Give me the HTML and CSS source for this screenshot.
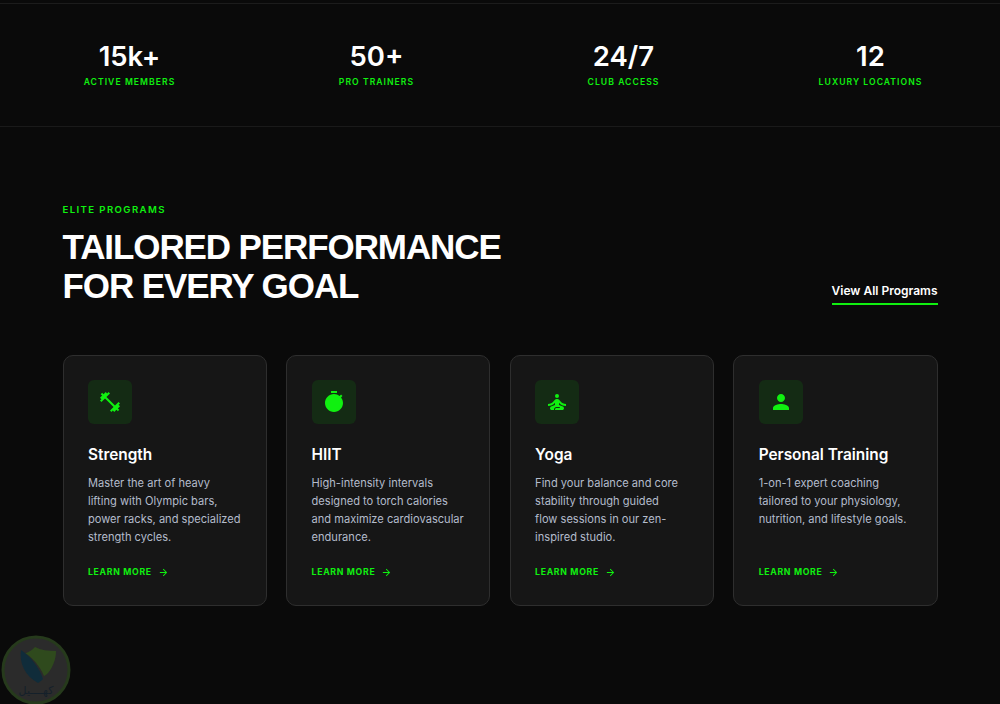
FILE: index.html
```html
<!DOCTYPE html>
<html lang="en">
<head>
    <meta charset="UTF-8">
    <meta name="viewport" content="width=device-width, initial-scale=1.0">
    <title>Elite Programs</title>
    <link rel="stylesheet" href="styles.css">
</head>
<body>

    <!-- Stats -->
    <div class="stats">
        <div class="stat">
            <div class="stat-value">15k+</div>
            <div class="stat-label">Active Members</div>
        </div>
        <div class="stat">
            <div class="stat-value">50+</div>
            <div class="stat-label">Pro Trainers</div>
        </div>
        <div class="stat">
            <div class="stat-value">24/7</div>
            <div class="stat-label">Club Access</div>
        </div>
        <div class="stat">
            <div class="stat-value">12</div>
            <div class="stat-label">Luxury Locations</div>
        </div>
    </div>

    <!-- Programs -->
    <div class="programs">
        <div class="programs-head">
            <div>
                <div class="eyebrow">Elite Programs</div>
                <h1>Tailored Performance<br>For Every Goal</h1>
            </div>
            <a class="view-all" href="#">View All Programs</a>
        </div>

        <div class="cards">
            <div class="card">
                <div class="card-icon">
                    <svg viewBox="0 0 24 24"><path d="M20.57 14.86L22 13.43 20.57 12 17 15.57 8.43 7 12 3.43 10.57 2 9.14 3.43 7.71 2 5.57 4.14 4.14 2.71 2.71 4.14l1.43 1.43L2 7.71l1.43 1.43L2 10.57 3.43 12 7 8.43 15.57 17 12 20.57 13.43 22l1.43-1.43L16.29 22l2.14-2.14 1.43 1.43 1.43-1.43-1.43-1.43L22 16.29z"/></svg>
                </div>
                <h3>Strength</h3>
                <p>Master the art of heavy<br>lifting with Olympic bars,<br>power racks, and specialized<br>strength cycles.</p>
                <a class="learn" href="#">Learn More <svg viewBox="0 0 24 24"><path d="M12 4l-1.41 1.41L16.17 11H4v2h12.17l-5.58 5.59L12 20l8-8z"/></svg></a>
            </div>
            <div class="card">
                <div class="card-icon">
                    <svg viewBox="0 0 24 24"><path d="M15 1H9v2h6V1zm-4 13h2V8h-2v6zm8.03-6.61l1.42-1.42c-.43-.51-.9-.99-1.41-1.41l-1.42 1.42C16.07 4.74 14.12 4 12 4c-4.97 0-9 4.03-9 9s4.02 9 9 9 9-4.03 9-9c0-2.12-.74-4.07-1.97-5.61z"/></svg>
                </div>
                <h3>HIIT</h3>
                <p>High-intensity intervals<br>designed to torch calories<br>and maximize cardiovascular<br>endurance.</p>
                <a class="learn" href="#">Learn More <svg viewBox="0 0 24 24"><path d="M12 4l-1.41 1.41L16.17 11H4v2h12.17l-5.58 5.59L12 20l8-8z"/></svg></a>
            </div>
            <div class="card">
                <div class="card-icon">
                    <svg viewBox="0 0 24 24"><circle cx="12" cy="6" r="2"/><path d="M21 16v-2c-2.24 0-4.16-.96-5.6-2.68l-1.34-1.6c-.38-.46-.94-.72-1.53-.72h-1.05c-.59 0-1.15.26-1.53.72l-1.34 1.6C7.16 13.04 5.24 14 3 14v2c2.77 0 5.19-1.17 7-3.25V15l-3.88 1.55c-.67.27-1.12.93-1.12 1.66C5 19.2 5.8 20 6.79 20H9v-.5c0-1.38 1.12-2.5 2.5-2.5h3c.28 0 .5.22.5.5s-.22.5-.5.5h-3c-.83 0-1.5.67-1.5 1.5v.5h7.21c.99 0 1.79-.8 1.79-1.79 0-.73-.45-1.39-1.12-1.66L14 15v-2.25c1.81 2.08 4.23 3.25 7 3.25z"/></svg>
                </div>
                <h3>Yoga</h3>
                <p>Find your balance and core<br>stability through guided<br>flow sessions in our zen-<br>inspired studio.</p>
                <a class="learn" href="#">Learn More <svg viewBox="0 0 24 24"><path d="M12 4l-1.41 1.41L16.17 11H4v2h12.17l-5.58 5.59L12 20l8-8z"/></svg></a>
            </div>
            <div class="card">
                <div class="card-icon">
                    <svg viewBox="0 0 24 24"><path d="M12 12c2.21 0 4-1.79 4-4s-1.79-4-4-4-4 1.79-4 4 1.79 4 4 4zm0 2c-2.67 0-8 1.34-8 4v2h16v-2c0-2.66-5.33-4-8-4z"/></svg>
                </div>
                <h3>Personal Training</h3>
                <p>1-on-1 expert coaching<br>tailored to your physiology,<br>nutrition, and lifestyle goals.</p>
                <a class="learn" href="#">Learn More <svg viewBox="0 0 24 24"><path d="M12 4l-1.41 1.41L16.17 11H4v2h12.17l-5.58 5.59L12 20l8-8z"/></svg></a>
            </div>
        </div>
    </div>

    <!-- Watermark -->
    <div class="watermark">
        <svg viewBox="0 0 70 70">
            <circle cx="35" cy="35" r="33" fill="#2b2b2b" stroke="#263a1c" stroke-width="3"/>
            <path d="M34 12 C30 16 26 18 24 18 C31 22 39 31 43 41 C45 40 46 39 47 38 C52 32 55 24 55 16 C47 16 40 15 34 12z" fill="#2f4a1d"/>
            <path d="M20 15 C18 28 24 41 37 48 C39 47 41 45 42 44 C38 32 30 22 20 15z" fill="#102c3a"/>
        </svg>
        <span class="watermark-text">كهــــيل</span>
    </div>

</body>
</html>
```

FILE: styles.css
```css
/* General Styles */
* {
    margin: 0;
    padding: 0;
    box-sizing: border-box;
}
body {
    background: #0a0a0a;
    color: #ffffff;
    font-family: Inter, "Liberation Sans", sans-serif;
    height: 704px;
    overflow: hidden;
    padding-top: 3px;
}

/* Stats */
.stats {
    display: grid;
    grid-template-columns: repeat(4, 132px);
    justify-content: space-between;
    padding: 38px 63.5px 0;
    height: 124px;
    border-top: 1px solid #1c1c1c;
    border-bottom: 1px solid #1a1a1a;
}
.stat {
    text-align: center;
}
.stat-value {
    font-size: 27.5px;
    font-weight: 600;
    line-height: 28px;
}
.stat-label {
    margin-top: 6px;
    font-size: 8.6px;
    font-weight: 600;
    line-height: 12px;
    letter-spacing: 1.05px;
    text-transform: uppercase;
    color: #10f010;
}

/* Programs */
.programs {
    padding: 77px 62.5px 0;
}
.programs-head {
    display: flex;
    justify-content: space-between;
    align-items: flex-end;
    margin-bottom: 50px;
}
.eyebrow {
    font-size: 9.6px;
    font-weight: 600;
    line-height: 12px;
    letter-spacing: 1.4px;
    text-transform: uppercase;
    color: #10f010;
    margin-bottom: 12px;
}
h1 {
    font-family: "Liberation Sans", Arial, sans-serif;
    font-size: 35px;
    font-weight: 700;
    line-height: 38.5px;
    letter-spacing: -1.1px;
    text-transform: uppercase;
}
.view-all {
    color: #ffffff;
    font-size: 12px;
    font-weight: 600;
    line-height: 14px;
    text-decoration: none;
    padding-bottom: 5px;
    border-bottom: 2px solid #10f010;
}

/* Cards */
.cards {
    display: grid;
    grid-template-columns: repeat(4, 1fr);
    gap: 19.2px;
}
.card {
    height: 251px;
    padding: 24px 24px 24px 24.5px;
    background: #161616;
    border: 1px solid #2e2e2e;
    border-radius: 10px;
    display: flex;
    flex-direction: column;
}
.card-icon {
    width: 44px;
    height: 44px;
    border-radius: 6px;
    background: #142b14;
    display: flex;
    align-items: center;
    justify-content: center;
    margin-bottom: 21px;
}
.card-icon svg {
    width: 24px;
    height: 24px;
    fill: #10f010;
}
.card h3 {
    font-size: 15.4px;
    font-weight: 600;
    line-height: 20px;
    margin-bottom: 10px;
}
.card p {
    font-size: 11.1px;
    line-height: 17.9px;
    color: #b4bccc;
    white-space: nowrap;
}
.learn {
    margin-top: auto;
    margin-bottom: 3px;
    display: flex;
    align-items: center;
    gap: 6px;
    color: #10f010;
    font-size: 8.7px;
    font-weight: 700;
    line-height: 12px;
    letter-spacing: 0.7px;
    text-transform: uppercase;
    text-decoration: none;
}
.learn svg {
    width: 11px;
    height: 11px;
    fill: #10f010;
}

/* Watermark */
.watermark {
    position: absolute;
    left: 1px;
    top: 635px;
    width: 70px;
    height: 70px;
}
.watermark svg {
    width: 70px;
    height: 70px;
}
.watermark-text {
    position: absolute;
    left: 0;
    right: 0;
    top: 49px;
    text-align: center;
    font-family: "DejaVu Sans", sans-serif;
    font-size: 11px;
    line-height: 14px;
    color: #14202a;
}
```
